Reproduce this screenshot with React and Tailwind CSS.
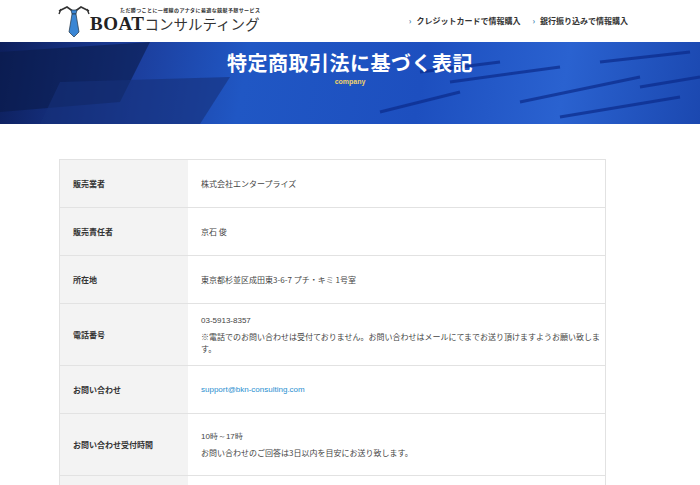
export default function App() {
  const jp = { fontFamily: '"Noto Sans CJK JP", "Liberation Sans", sans-serif' };
  const rows = [
    ["販売業者", ["株式会社エンタープライズ"], 48],
    ["販売責任者", ["京石 俊"], 48],
    ["所在地", ["東京都杉並区成田東3-6-7 プチ・キミ 1号室"], 48],
    ["電話番号", ["03-5913-8357", "\u203B\uFE0E電話でのお問い合わせは受付ておりません。お問い合わせはメールにてまでお送り頂けますようお願い致します。"], 62],
    ["お問い合わせ", ["support@bkn-consulting.com"], 48, true],
    ["お問い合わせ受付時間", ["10時～17時", "お問い合わせのご回答は3日以内を目安にお送り致します。"], 62],
    ["", [""], 48],
  ];
  return (
    <div className="w-[700px] h-[485px] overflow-hidden bg-white" style={jp}>
      <div className="h-[42px] flex items-center justify-between pl-[58px] pr-[72px]">
        <div className="flex items-center">
          <svg width="32" height="32" viewBox="0 0 32 32">
            <path d="M1 6 L9 2 L16 7 L23 2 L31 6" stroke="#333" strokeWidth="1.6" fill="none" />
            <path d="M3 4 L1 9 M29 4 L31 9" stroke="#333" strokeWidth="1.4" />
            <path d="M13 5 L19 5 L18 9 L14 9 Z" fill="#3a86d4" stroke="#234" strokeWidth="0.7" />
            <path d="M14 9 L18 9 L21 27 L16 32 L11 27 Z" fill="#3a86d4" stroke="#234" strokeWidth="0.7" />
          </svg>
          <div className="flex flex-col">
            <div className="text-[5px] leading-[6px] text-[#333] ml-[30px] font-bold tracking-[0.4px]">ただ勝つことに一攫線のアナタに最適な競艇予想サービス</div>
            <div className="flex items-baseline leading-[22px]">
              <span className="text-[19px] font-bold text-[#222] tracking-[0.5px]" style={{ fontFamily: '"Liberation Serif", serif' }}>BOAT</span>
              <span className="text-[14.5px] text-[#333]">コンサルティング</span>
            </div>
          </div>
        </div>
        <div className="flex gap-[12px] text-[8px] font-bold text-[#333]">
          <span><span className="text-[#4a8bb5] mr-[5px]">›</span>クレジットカードで情報購入</span>
          <span><span className="text-[#4a8bb5] mr-[5px]">›</span>銀行振り込みで情報購入</span>
        </div>
      </div>
      <div className="h-[82px] relative overflow-hidden bg-[linear-gradient(100deg,#0d1f5c_0%,#1c3f9e_20%,#2057c4_35%,#1d4fbf_60%,#2a62d0_80%,#1b48b0_100%)] flex flex-col items-center">
        <svg className="absolute inset-0" width="700" height="82">
          <path d="M0 10 L150 0 L120 60 L0 70 Z" fill="#0a1a4a" opacity="0.6" />
          <path d="M60 40 L230 35 L200 82 L40 82 Z" fill="#15307a" opacity="0.6" />
          {[[380,70,460,50],[450,40,560,25],[520,60,640,35],[600,20,690,10],[420,30,500,20],[560,75,680,55],[640,45,700,35]].map((l,i)=>(
            <path key={i} d={`M${l[0]} ${l[1]} L${l[2]} ${l[3]}`} stroke="#0b2a8a" strokeWidth="3" opacity="0.7" />
          ))}
        </svg>
        <div className="relative mt-[8px] text-white text-[20px] font-bold leading-[26px] tracking-[0.5px]">特定商取引法に基づく表記</div>
        <div className="relative text-[#f1d36a] text-[7px] font-bold leading-[8px] mt-[2px]" style={{ fontFamily: '"Liberation Sans", sans-serif' }}>company</div>
      </div>
      <div className="mt-[35px] ml-[59px] w-[547px] border border-[#e2e2e2]">
        {rows.map(([l, v, h, link], i) => (
          <div key={i} className="flex border-b border-[#e2e2e2]" style={{ height: h }}>
            <div className="w-[128px] bg-[#f3f3f3] flex items-center pl-[13px] text-[8px] font-bold text-[#333]">{l}</div>
            <div className="flex-1 flex flex-col justify-center pl-[13px] gap-[4px] text-[8px] text-[#444]">
              {v.map((t, j) => (
                <div key={j} className={link ? "text-[#2a8fd0]" : ""} style={/^[0-9a-z]/.test(t) ? { fontFamily: '"Liberation Sans", sans-serif' } : undefined}>{t}</div>
              ))}
            </div>
          </div>
        ))}
      </div>
    </div>
  );
}
